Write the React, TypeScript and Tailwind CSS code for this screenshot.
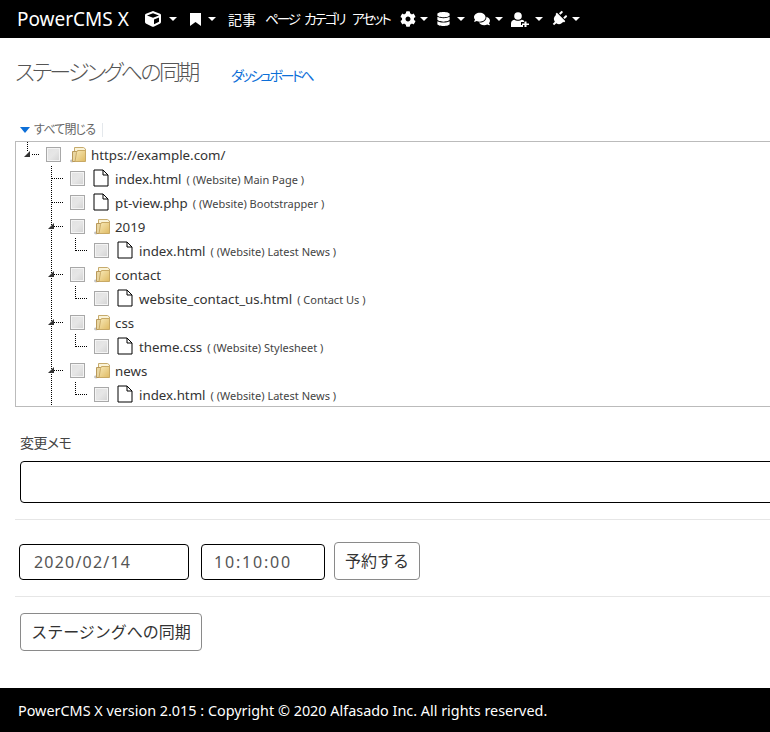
import { FaCog, FaComments, FaCube, FaDatabase, FaPlug } from 'react-icons/fa'
import type { ReactNode } from 'react'

// Latin first, CJK after it
const FONT = "font-['Noto_Sans','Noto_Sans_CJK_JP',sans-serif]"
// closes up the kana like the reference's narrow UI font
const TIGHT = "[font-feature-settings:'palt']"

interface TreeItem {
  level: number
  kind: 'folder' | 'file'
  name: string
  note?: string
  // draws the little triangle in front of an open folder
  open?: boolean
}

const TREE: TreeItem[] = [
  { level: 0, kind: 'folder', name: 'https://example.com/', open: true },
  { level: 1, kind: 'file', name: 'index.html', note: '( (Website) Main Page )' },
  { level: 1, kind: 'file', name: 'pt-view.php', note: '( (Website) Bootstrapper )' },
  { level: 1, kind: 'folder', name: '2019', open: true },
  { level: 2, kind: 'file', name: 'index.html', note: '( (Website) Latest News )' },
  { level: 1, kind: 'folder', name: 'contact', open: true },
  { level: 2, kind: 'file', name: 'website_contact_us.html', note: '( Contact Us )' },
  { level: 1, kind: 'folder', name: 'css', open: true },
  { level: 2, kind: 'file', name: 'theme.css', note: '( (Website) Stylesheet )' },
  { level: 1, kind: 'folder', name: 'news', open: true },
  { level: 2, kind: 'file', name: 'index.html', note: '( (Website) Latest News )' },
]

function Caret({ className = '' }: { className?: string }) {
  return (
    <span
      className={`inline-block w-0 h-0 border-x-[4px] border-x-transparent border-t-[4px] border-t-white ${className}`}
    />
  )
}

function NavIcon({ children, width }: { children: ReactNode; width: string }) {
  return (
    <span className={`flex items-center ${width}`}>
      {children}
      <Caret className="ml-auto" />
    </span>
  )
}

function Bookmark() {
  return (
    <svg width="11" height="13" viewBox="0 0 11 13" fill="#fff">
      <path d="M0 0 H11 V13 L5.5 9 L0 13 Z" />
    </svg>
  )
}

function UserPlus() {
  return (
    <svg width="18" height="15" viewBox="0 0 18 15" fill="#fff">
      <circle cx="7" cy="4" r="3.8" />
      <path d="M0 15 V11.5 C0 9 2 7.8 3.5 7.8 C5 9.2 9 9.2 10.5 7.8 C11.5 7.8 12.3 8.2 13 8.8 V10 H10 V13 H12 V15 Z" />
      <path d="M13.5 9.5 H15.5 V11.5 H18 V13 H15.5 V15 H13.5 V13 H11 V11.5 H13.5 Z" />
    </svg>
  )
}

function Connector({ item }: { item: TreeItem }) {
  const width = 30 + item.level * 24
  const dot = { stroke: '#000', strokeWidth: 1, strokeDasharray: '1 1', shapeRendering: 'crispEdges' as const }
  return (
    <svg width={width} height={24} className="shrink-0">
      {/* trunk running down past the level 1 rows */}
      {item.level >= 1 && <line x1={35.5} y1={0} x2={35.5} y2={24} {...dot} />}
      {item.level === 2 && (
        <>
          <line x1={59.5} y1={0} x2={59.5} y2={12.5} {...dot} />
          <line x1={59.5} y1={12.5} x2={72} y2={12.5} {...dot} />
        </>
      )}
      {item.level === 1 && <line x1={36} y1={12.5} x2={48} y2={12.5} {...dot} />}
      {item.level === 0 && (
        <>
          <line x1={11.5} y1={0} x2={11.5} y2={10} {...dot} />
          <line x1={16} y1={12.5} x2={24} y2={12.5} {...dot} />
        </>
      )}
      {item.open && (
        <polygon
          points={`${8 + item.level * 24},15 ${14 + item.level * 24},15 ${14 + item.level * 24},9`}
          fill="#333"
        />
      )}
    </svg>
  )
}

function Checkbox() {
  return (
    <span className="block w-[15px] h-[15px] shrink-0 border border-[#a8a8a8] bg-gradient-to-br from-[#e2e2e2] via-[#e6e6e6] to-[#d2d2d2] shadow-[inset_0_0_0_1px_#f4f4f4]" />
  )
}

function FolderIcon() {
  return (
    <svg width="17" height="17" viewBox="0 0 17 17" className="shrink-0">
      <defs>
        <linearGradient id="folderFront" x1="0" y1="0" x2="1" y2="1">
          <stop offset="0" stopColor="#f8e9b8" />
          <stop offset="1" stopColor="#dfba62" />
        </linearGradient>
      </defs>
      <ellipse cx="2" cy="15" rx="2" ry="1.4" fill="#c4c4c4" />
      <path d="M4.5 6 V1.5 H13.5 L15.5 3 V6 Z" fill="#faf3d8" stroke="#c6ab6d" />
      <path d="M2.5 15.5 V5.5 H7.5 V15.5 Z" fill="#e9d6a0" stroke="#b9995a" />
      <path d="M7.5 4.5 H15.5 V15.5 H5 L6.5 6.5 Z" fill="url(#folderFront)" stroke="#c8a965" />
    </svg>
  )
}

function FileIcon() {
  return (
    <svg width="16" height="18" viewBox="0 0 16 18" className="shrink-0">
      <path d="M1 1 H10 L15 6 V17 H1 Z" fill="#fff" stroke="#000" />
      <path d="M10 1 V6 H15" fill="none" stroke="#000" />
    </svg>
  )
}

function TreeRow({ item }: { item: TreeItem }) {
  return (
    <li className="flex items-center h-6 whitespace-nowrap">
      <Connector item={item} />
      <Checkbox />
      <span className={item.kind === 'folder' ? 'ml-[9px]' : 'ml-[8px]'}>
        {item.kind === 'folder' ? <FolderIcon /> : <FileIcon />}
      </span>
      <span className={`${item.kind === 'folder' ? 'ml-[4px]' : 'ml-[6px]'} mt-[4px] text-[13.3px] text-[#333]`}>
        {item.name}
      </span>
      {item.note && <span className="ml-[5px] mt-[5px] text-[11px] text-[#444]">{item.note}</span>}
    </li>
  )
}

export default function App() {
  return (
    <div className={`w-[770px] h-[732px] overflow-hidden flex flex-col bg-white ${FONT}`}>
      <nav className="h-[38px] shrink-0 flex items-center bg-black text-white pl-[17px] w-[800px] whitespace-nowrap">
        <span className="w-[128px] text-[19px] leading-none">PowerCMS X</span>
        <NavIcon width="w-[32px]"><FaCube className="w-4 h-4" /></NavIcon>
        <span className="w-[13px]" />
        <NavIcon width="w-[26px]"><Bookmark /></NavIcon>
        <span className="w-[12px]" />
        <span className={`w-[37px] text-[14px] ${TIGHT}`}>記事</span>
        <span className={`w-[39px] text-[13.5px] tracking-[-2px] ${TIGHT}`}>ページ</span>
        <span className={`w-[48px] text-[13.5px] tracking-[-2px] ${TIGHT}`}>カテゴリ</span>
        <span className={`w-[48px] text-[13.5px] tracking-[-2.2px] ${TIGHT}`}>アセット</span>
        <NavIcon width="w-[28px]"><FaCog className="w-4 h-4" /></NavIcon>
        <span className="w-[9px]" />
        <NavIcon width="w-[28px]"><FaDatabase className="w-[13px] h-[14px]" /></NavIcon>
        <span className="w-[9px]" />
        <NavIcon width="w-[29px]"><FaComments className="w-4 h-4" /></NavIcon>
        <span className="w-[8px]" />
        <NavIcon width="w-[32px]"><UserPlus /></NavIcon>
        <span className="w-[8px]" />
        <NavIcon width="w-[29px]"><FaPlug className="w-4 h-4 rotate-45" /></NavIcon>
      </nav>

      <main className="flex-1 w-[800px] pl-[15px]">
        <div className="flex items-center h-[46px] mt-[12px]">
          <h1 className={`text-[22px] font-light text-[#555] w-[216px] leading-none mt-[-4px] tracking-[-2.7px] ${TIGHT}`}>
            ステージングへの同期
          </h1>
          <a className={`text-[14px] text-[#0d6fd8] mt-[4px] tracking-[-2.5px] ${TIGHT}`}>ダッシュボードへ</a>
        </div>

        <div className="flex items-center h-[24px] mt-[22px] pl-[5px] text-[12px] text-[#666]">
          <span className="w-0 h-0 border-x-[5px] border-x-transparent border-t-[6px] border-t-[#0d6fd8]" />
          <span className={`ml-[4px] w-[68px] tracking-[-0.8px] ${TIGHT}`}>すべて閉じる</span>
          <span className="h-[14px] border-l border-[#e4e8ec]" />
        </div>

        <div className="h-[266px] overflow-hidden border border-[#bbb] mt-[-1px] relative">
          <ul>
            {TREE.map((item, i) => (
              <TreeRow key={i} item={item} />
            ))}
          </ul>
        </div>

        <div className={`mt-[26px] pl-[5px] text-[14px] leading-[20px] text-[#444] tracking-[-0.6px] ${TIGHT}`}>変更メモ</div>
        <div className="mt-[8px] ml-[5px] h-[42px] border border-black rounded-[4px] bg-white" />

        <hr className="mt-[16px] border-[#e6e6e6]" />

        <div className="flex items-center mt-[22px] ml-[4px] h-[38px]">
          <div className="w-[170px] h-[36px] mt-[2px] flex items-center pl-[14px] border border-black rounded-[4px] text-[16px] tracking-[1.2px] text-[#555]">
            2020/02/14
          </div>
          <div className="ml-[12px] w-[124px] h-[36px] mt-[2px] flex items-center pl-[12px] border border-black rounded-[4px] text-[16px] tracking-[1.8px] text-[#555]">
            10:10:00
          </div>
          <button className="ml-[9px] w-[86px] h-[38px] border border-[#8a8a8a] rounded-[4px] text-[16px] text-[#333]">
            予約する
          </button>
        </div>

        <hr className="mt-[16px] border-[#e6e6e6]" />

        <button className="block mt-[16px] ml-[5px] w-[182px] h-[38px] border border-[#8a8a8a] rounded-[4px] text-[16px] text-[#333]">
          ステージングへの同期
        </button>
      </main>

      <footer className="h-[44px] shrink-0 flex items-center pl-[18px] pt-[2px] bg-black text-white text-[14.4px] whitespace-nowrap">
        PowerCMS X version 2.015 : Copyright © 2020 Alfasado Inc. All rights reserved.
      </footer>
    </div>
  )
}
